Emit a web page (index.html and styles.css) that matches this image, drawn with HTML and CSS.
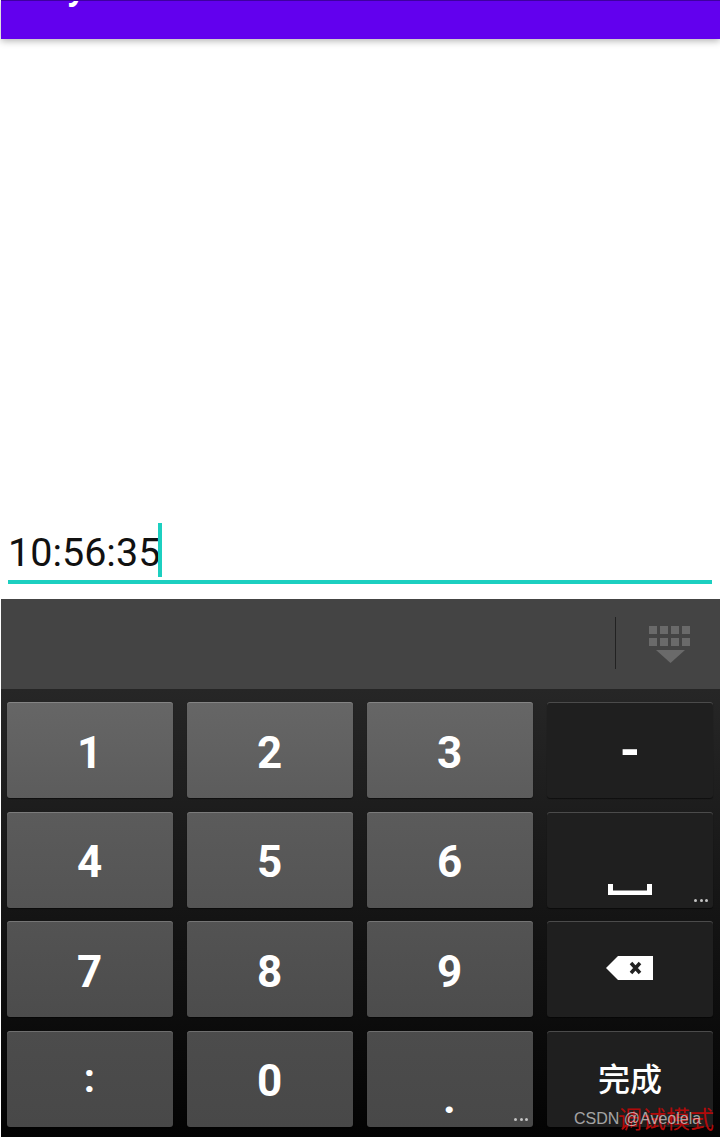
FILE: index.html
```html
<!DOCTYPE html>
<html lang="en">

<head>
    <meta charset="UTF-8" />
    <meta name="viewport" content="width=device-width, initial-scale=1.0" />
    <title>Time input</title>
    <link rel="stylesheet" href="styles.css">
</head>

<body>
    <header class="app-bar">
        <span class="app-title">My</span>
    </header>

    <main class="content">
        <div class="time-field">
            <span class="time-value">10:56:35</span><span class="caret"></span>
        </div>
    </main>

    <section class="keyboard">
        <div class="keyboard-bar">
            <span class="bar-divider"></span>
            <svg class="hide-icon" width="42" height="37" viewBox="0 0 42 37" fill="#6a6a6a">
                <rect x="0" y="0" width="8" height="8" />
                <rect x="11" y="0" width="8" height="8" />
                <rect x="22" y="0" width="8" height="8" />
                <rect x="33" y="0" width="8" height="8" />
                <rect x="0" y="12" width="8" height="8" />
                <rect x="11" y="12" width="8" height="8" />
                <rect x="22" y="12" width="8" height="8" />
                <rect x="33" y="12" width="8" height="8" />
                <path d="M7 24H36L21.500 37Z" />
            </svg>
        </div>

        <div class="keys">
            <button class="key row-1">1</button>
            <button class="key row-1">2</button>
            <button class="key row-1">3</button>
            <button class="key key-dark key-dash">-</button>

            <button class="key row-2">4</button>
            <button class="key row-2">5</button>
            <button class="key row-2">6</button>
            <button class="key key-dark">
                <svg class="space-icon" width="44" height="11" viewBox="0 0 44 11" fill="#fff">
                    <path d="M0 0H5V6.500H39V0H44V11H0Z" />
                </svg>
                <span class="more-dots"><i></i><i></i><i></i></span>
            </button>

            <button class="key row-3">7</button>
            <button class="key row-3">8</button>
            <button class="key row-3">9</button>
            <button class="key key-dark key-back">
                <svg width="48" height="24" viewBox="0 0 48 24">
                    <path d="M13 0H48V24H13L1 12Z" fill="#fff" />
                    <path d="M26 7L35 17M35 7L26 17" stroke="#222" stroke-width="3.500" />
                </svg>
            </button>

            <button class="key row-4 key-colon">:</button>
            <button class="key row-4">0</button>
            <button class="key row-4 key-dot">
                .
                <span class="more-dots"><i></i><i></i><i></i></span>
            </button>
            <button class="key key-dark key-done">完成</button>
        </div>

        <div class="watermark">
            <span class="debug-mark">调试模式</span>
            <span class="csdn-mark">CSDN @Aveolela</span>
        </div>
    </section>
</body>

</html>
```

FILE: styles.css
```css
html,
body {
    margin: 0;
    height: 100%;
}

body {
    width: 720px;
    height: 1137px;
    overflow: hidden;
    display: flex;
    flex-direction: column;
    background-color: #ffffff;
    font-family: 'Roboto', sans-serif;
}

.app-bar {
    height: 39px;
    margin-left: 1px;
    overflow: hidden;
    background-color: #6200ee;
    border-top: 1px solid #3f00a0;
    box-sizing: border-box;
    box-shadow: 0 2px 7px rgba(0, 0, 0, 0.3);
    position: relative;
    padding-left: 31px;
}

.app-title {
    display: block;
    margin-top: -35px;
    line-height: 40px;
    font-size: 40px;
    font-weight: 500;
    color: #ffffff;
}

.content {
    height: 560px;
    box-sizing: border-box;
    padding: 484px 8px 0;
}

.time-field {
    height: 61px;
    box-sizing: border-box;
    border-bottom: 4px solid #1ccfc0;
    display: flex;
    align-items: flex-start;
}

.time-value {
    font-size: 39.500px;
    line-height: 60px;
    color: #111111;
}

.caret {
    width: 4px;
    height: 54px;
    background-color: #1ccfc0;
    margin-left: -2px;
}

.keyboard {
    flex: 1;
    margin-left: 1px;
    position: relative;
    display: flex;
    flex-direction: column;
}

.keyboard-bar {
    height: 90px;
    background-color: #444444;
    display: flex;
    align-items: center;
    justify-content: flex-end;
    padding-right: 29px;
}

.bar-divider {
    width: 1px;
    height: 52px;
    background-color: #222222;
    margin-right: 33px;
    margin-top: -2px;
}

.keys {
    flex: 1;
    box-sizing: border-box;
    padding: 13.400px 6px 10px;
    display: grid;
    grid-template-columns: repeat(4, 166px);
    grid-template-rows: repeat(4, 96px);
    column-gap: 14px;
    row-gap: 13.400px;
    background: linear-gradient(#262626, #030303);
}

.key {
    position: relative;
    padding: 5px 1px 0 0;
    border: none;
    border-radius: 3px;
    font-family: 'Roboto', sans-serif;
    font-size: 44px;
    font-weight: 700;
    color: #ffffff;
    display: flex;
    align-items: center;
    justify-content: center;
    box-sizing: border-box;
    box-shadow: inset 0 1px 0 rgba(255, 255, 255, 0.2), 0 1px 1px rgba(0, 0, 0, 0.5);
}

.row-1 {
    background: linear-gradient(#666666, #5c5c5c);
}

.row-2 {
    background: linear-gradient(#5b5b5b, #545454);
}

.row-3 {
    background: linear-gradient(#535353, #4c4c4c);
}

.row-4 {
    background: linear-gradient(#4c4c4c, #484848);
}

.key-dark {
    background: #1f1f1f;
}

.key-dash {
    font-size: 52px;
    padding: 0;
}

.key-back {
    padding: 0 2px 2px 0;
}

.space-icon {
    margin-top: 55px;
}

.key-colon {
    padding-top: 0;
    font-size: 40px;
}

.key-dot {
    align-items: flex-end;
    line-height: 40px;
    padding: 0 1px 9px 0;
}

.key-done {
    padding: 0 0 4px;
    font-family: 'Noto Sans CJK SC', sans-serif;
    font-size: 32px;
    font-weight: 500;
}

.more-dots {
    position: absolute;
    right: 5px;
    bottom: 6px;
    display: flex;
    gap: 2.500px;
}

.more-dots i {
    width: 3px;
    height: 3px;
    border-radius: 50%;
    background-color: #c4c4c4;
}

.watermark {
    position: absolute;
    right: 5px;
    bottom: 4px;
    width: 146px;
    height: 30px;
    pointer-events: none;
}

.debug-mark {
    position: absolute;
    right: 1px;
    top: 0;
    font-family: 'Noto Sans CJK SC', sans-serif;
    font-size: 24px;
    line-height: 30px;
    color: #b00a0a;
    white-space: nowrap;
}

.csdn-mark {
    position: absolute;
    left: 5px;
    top: 7px;
    font-family: 'Liberation Sans', sans-serif;
    font-size: 16px;
    line-height: 18px;
    color: rgba(255, 255, 255, 0.6);
    white-space: nowrap;
}
```
